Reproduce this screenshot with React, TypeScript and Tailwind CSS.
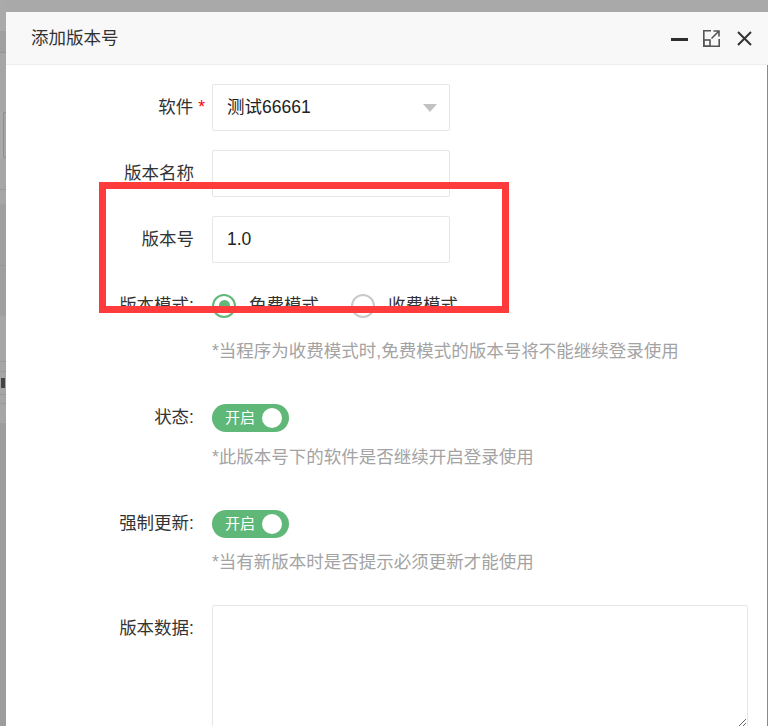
import React from "react";

const labelCls =
  "w-[206px] shrink-0 pr-[18px] text-right text-[17.5px] text-[#333]";

const Row = ({
  label,
  children,
  className = "",
}: {
  label: React.ReactNode;
  children: React.ReactNode;
  className?: string;
}) => (
  <div className={`flex items-center h-[47px] ${className}`}>
    <div className={labelCls}>{label}</div>
    {children}
  </div>
);

const Hint = ({ text, className = "" }: { text: string; className?: string }) => (
  <div
    className={`pl-[206px] h-[22px] leading-[22px] text-[17.5px] text-[#a3a3a3] ${className}`}
  >
    {text}
  </div>
);

const Radio = ({ checked, label }: { checked?: boolean; label: string }) => (
  <div className="flex items-center">
    <span
      className={`w-[24px] h-[24px] rounded-full border-2 flex items-center justify-center ${
        checked ? "border-[#5FB878]" : "border-[#c9c9c9]"
      }`}
    >
      {checked && <span className="w-[11px] h-[11px] rounded-full bg-[#5FB878]" />}
    </span>
    <span className="ml-[13px] text-[17.5px] text-[#333]">{label}</span>
  </div>
);

const Switch = () => (
  <div className="w-[77px] h-[28px] rounded-full bg-[#5FB878] flex items-center pl-[13px]">
    <span className="text-[15px] text-white leading-none">开启</span>
    <span className="ml-auto mr-[7px] w-[20px] h-[20px] rounded-full bg-white" />
  </div>
);

// the page behind the overlay, only a sliver of it shows on the left
const BackdropStrip = () => (
  <div className="w-[6px] shrink-0 flex flex-col">
    <div className="h-[31px] bg-[#aaaaaa]" />
    <div className="h-[22px] bg-[#a0a0a0] border-b border-[#959595]" />
    <div className="h-[59px] bg-[#a6a6a6]" />
    <div className="h-[46px] bg-[#a6a6a6] border-l border-y border-[#8e8e8e] rounded-l-[2px] ml-[3px]" />
    <div className="h-[32px] bg-[#a6a6a6] border-b border-[#999]" />
    <div className="h-[14px] bg-[#a6a6a6]" />
    <div className="h-[62px] bg-[#9f9f9f] border-b border-[#979797]" />
    <div className="h-[50px] bg-[#9f9f9f]" />
    <div className="h-[46px] bg-[#a6a6a6] border-b border-[#999]" />
    <div className="h-[10px] bg-[#a6a6a6] border-b border-[#999]" />
    <div className="h-[22px] bg-[#a6a6a6] flex items-center">
      <span className="w-[4px] h-[10px] bg-[#444] ml-[1px]" />
    </div>
    <div className="h-[10px] bg-[#a6a6a6] border-y border-[#999]" />
    <div className="h-[19px] bg-[#a6a6a6]" />
    <div className="flex-1 bg-[#9d9d9d]" />
  </div>
);

export default function App() {
  return (
    <div className="w-[768px] h-[726px] overflow-hidden bg-[#a9a9a9] flex font-[family-name:Liberation_Sans,Noto_Sans_CJK_SC,sans-serif]">
      <BackdropStrip />
      <div className="relative flex-1 mt-[12px] flex flex-col bg-white">
        {/* title bar */}
        <div className="h-[53px] shrink-0 bg-[#f8f8f8] border-b border-[#eee] flex items-center pl-[25px] pr-[16px]">
          <span className="text-[17.5px] text-[#333]">添加版本号</span>
          <div className="ml-auto flex items-center">
            <span className="w-[17px] h-[3px] bg-[#2e2e2e] mt-[2px]" />
            <svg
              className="ml-[15px]"
              width="17"
              height="17"
              viewBox="0 0 17 17"
              fill="none"
              stroke="#555"
              strokeWidth="1.6"
            >
              <path d="M8 0.8H0.8V16.2H16.2V9" />
              <path d="M8.5 8.5L15.8 1.2M10.5 1H16V6.5" />
              <rect x="0.8" y="10" width="6.2" height="6.2" />
            </svg>
            <svg
              className="ml-[17px]"
              width="15"
              height="15"
              viewBox="0 0 15 15"
              stroke="#333"
              strokeWidth="2"
            >
              <path d="M1 1L14 14M14 1L1 14" />
            </svg>
          </div>
        </div>

        {/* form body */}
        <div className="flex-1 border-r border-[#8a8a8a] pt-[19px] pr-[19px]">
          <Row
            label={
              <span className="mr-[-11px]">
                软件<span className="ml-[5px] text-[#f00]">*</span>
              </span>
            }
          >
            <div className="w-[238px] h-[47px] border border-[#e6e6e6] rounded-[2px] flex items-center pl-[14px] pr-[12px] text-[17.5px] text-[#222]">
              测试66661
              <span className="ml-auto w-0 h-0 border-x-[7px] border-x-transparent border-t-[8px] border-t-[#c2c2c2]" />
            </div>
          </Row>
          <Row label="版本名称" className="mt-[19px]">
            <div className="w-[238px] h-[47px] border border-[#e6e6e6] rounded-[2px]" />
          </Row>
          <Row label="版本号" className="mt-[19px]">
            <div className="w-[238px] h-[47px] border border-[#e6e6e6] rounded-[2px] flex items-center pl-[14px] text-[17.5px] text-[#222]">
              1.0
            </div>
          </Row>
          <Row label="版本模式:" className="mt-[19px]">
            <Radio checked label="免费模式" />
            <div className="ml-[32px]">
              <Radio label="收费模式" />
            </div>
          </Row>
          <Hint
            text="*当程序为收费模式时,免费模式的版本号将不能继续登录使用"
            className="mt-[11px]"
          />
          <Row label="状态:" className="mt-[32px]">
            <Switch />
          </Row>
          <Hint text="*此版本号下的软件是否继续开启登录使用" className="mt-[5px]" />
          <Row label="强制更新:" className="mt-[32px]">
            <Switch />
          </Row>
          <Hint text="*当有新版本时是否提示必须更新才能使用" className="mt-[4px]" />
          <div className="flex mt-[32px]">
            <div className={`${labelCls} leading-[47px]`}>版本数据:</div>
            <textarea
              readOnly
              className="flex-1 h-[123px] border border-[#e6e6e6] rounded-[2px] outline-none"
            />
          </div>
        </div>

        {/* highlight box drawn over the form */}
        <div className="absolute left-[93px] top-[170px] w-[410px] h-[131px] border-[7px] border-[#ff3b3b] pointer-events-none" />
      </div>
    </div>
  );
}
